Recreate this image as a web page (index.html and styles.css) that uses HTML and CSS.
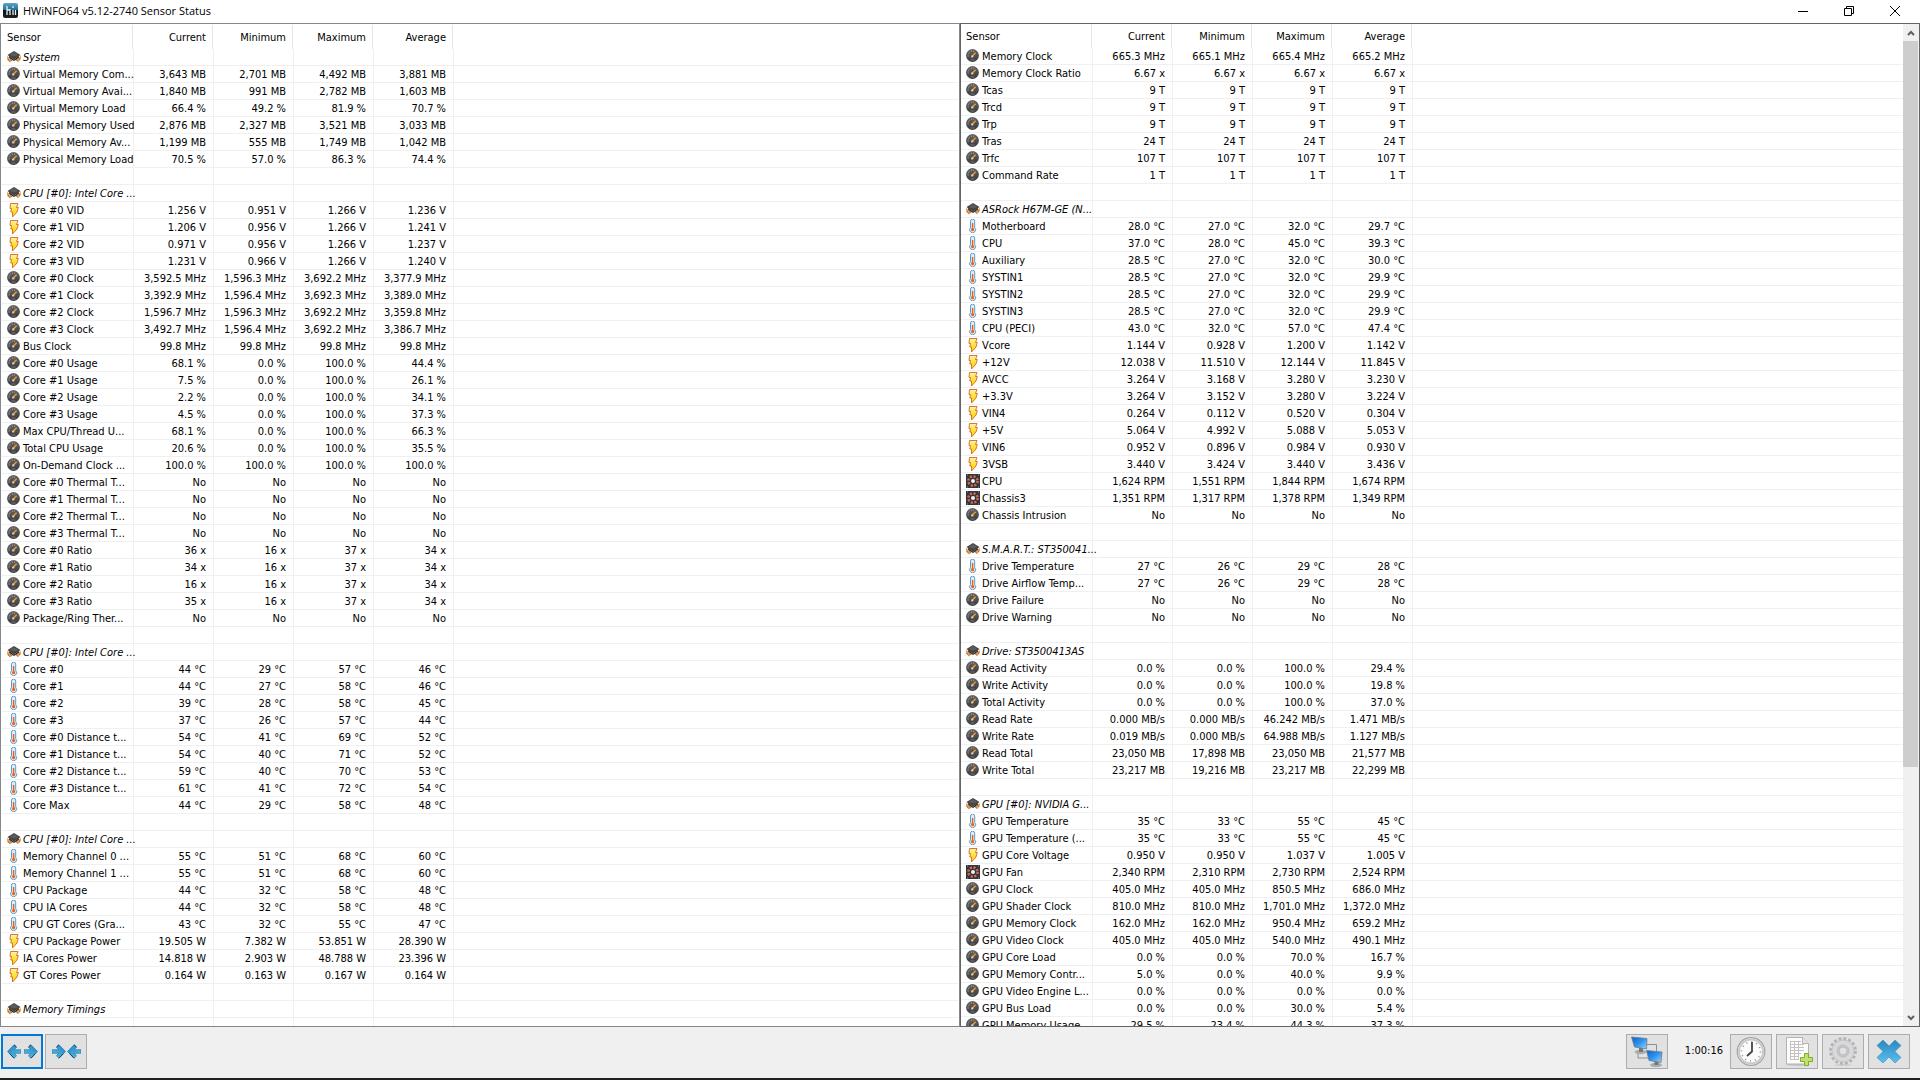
FILE: index.html
```html
<!DOCTYPE html>
<html lang="en">
<head>
  <meta charset="UTF-8">
  <title>HWiNFO64 v5.12-2740 Sensor Status</title>
  <link rel="stylesheet" href="styles.css">
</head>

<body>

<svg class="defs" aria-hidden="true">
  <linearGradient id="gdark" x1="0" y1="0" x2="0" y2="1"><stop offset="0" stop-color="#666"/><stop offset="1" stop-color="#3a3a3a"/></linearGradient>
  <linearGradient id="gblue" x1="0" y1="0" x2="1" y2="1"><stop offset="0" stop-color="#1c7fc4"/><stop offset="1" stop-color="#5cc8e0"/></linearGradient>
  <linearGradient id="gscreen" x1="0" y1="0" x2="1" y2="1"><stop offset="0" stop-color="#0b5fd0"/><stop offset=".5" stop-color="#2f93ee"/><stop offset="1" stop-color="#9fd4fb"/></linearGradient>
  <linearGradient id="gx" x1="0" y1="0" x2="0" y2="1"><stop offset="0" stop-color="#2b86bd"/><stop offset="1" stop-color="#5bc0f0"/></linearGradient>
  <linearGradient id="gbolt" x1="0" y1="0" x2="0" y2="1"><stop offset="0" stop-color="#fff3b0"/><stop offset=".5" stop-color="#ffe03a"/><stop offset="1" stop-color="#ffd200"/></linearGradient>
  <linearGradient id="gapp" x1="0" y1="0" x2="0" y2="1"><stop offset="0" stop-color="#5ba7c6"/><stop offset=".5" stop-color="#176a95"/><stop offset=".5" stop-color="#111"/><stop offset="1" stop-color="#222"/></linearGradient>

  <symbol id="gauge" viewBox="0 0 14 14">
    <circle cx="6.5" cy="6.5" r="6.4" fill="url(#gdark)"/>
    <path d="M2.2 7.5A4.4 4.4 0 0 1 8 2.4" fill="none" stroke="#b4b4b4" stroke-dasharray="1 1.1"/>
    <path d="M6.2 7.2L9.6 3.8" stroke="#f79420" stroke-width="1.6"/>
    <circle cx="6.2" cy="7.4" r="1.2" fill="#c9c9c9"/>
    <path d="M4.5 11H8.5" stroke="#777"/>
  </symbol>
  <symbol id="chip" viewBox="0 0 14 14">
    <path d="M0 6l7 3.500L14 6v3l-2.500 3L7 9.500 3 12.500 0 9.500z" fill="#e0a972"/>
    <path d="M1 9l1.500 2.500M3 8l1.500 3M9.500 9l1 2.500M12 8l.5 2" stroke="#9c5f2c" stroke-width=".8"/>
    <path d="M7 1l6.500 4L7 9.800.5 5z" fill="#444"/>
    <path d="M7 2l4.500 3L7 6.500 2.500 5z" fill="#5c5c5c"/>
    <path d="M2 6L7 9.800 12 6v1.500L7 11 2 7.500z" fill="#252525"/>
  </symbol>
  <symbol id="bolt" viewBox="0 0 14 14">
    <path d="M3.500.5h7.500L9.500 4.500h1.800L10 9l-4.500 5V9H3.800L4.500 5.500H3z" fill="url(#gbolt)" stroke="#cf6a20" stroke-width=".9"/>
  </symbol>
  <symbol id="thermo" viewBox="0 0 14 14">
    <path d="M4.500 2.200a2.100 2.100 0 0 1 4.200 0V8.600a3 3 0 1 1-4.200 0z" fill="#d9eefa" stroke="#6497bd"/>
    <path d="M6.600 4V10" stroke="#e8631a" stroke-width="1.400"/>
    <circle cx="6.600" cy="10.600" r="1.600" fill="#f2600f"/>
  </symbol>
  <symbol id="fan" viewBox="0 0 14 14">
    <path d="M0 0h14v14H0z" fill="#30363c"/>
    <circle cx="7" cy="7" r="4.600" fill="none" stroke="#d8664c" stroke-width="2.600" stroke-dasharray="2.100 1.500"/>
    <circle cx="7" cy="7" r="2" fill="#f3f0f0"/>
    <path d="M1 1h1M12 1h1M1 13h1M12 13h1" stroke="#8b959d"/>
  </symbol>
  <symbol id="arrow" viewBox="0 0 14 15">
    <path d="M.5 7.500L7 .8 9.500 3 7.500 5.700H14V9.300H7.500L9.500 12 7 14.200z" fill="url(#gblue)" stroke="#1a6aa8" stroke-width=".6"/>
    <path d="M7 .8L9.500 3M2.500 9.500L7 14.200" stroke="#17406c"/>
  </symbol>
</svg>

<header class="titlebar">
  <svg class="app-icon" viewBox="0 0 15 15"><rect width="15" height="15" rx="2" fill="url(#gapp)"/><path d="M4 3v9M7 6v6M10 3v2M10 7v5M12.500 7v5M4 7h3" stroke="#e6f2f8" stroke-width="1.300"/></svg>
  <h1 class="title">HWiNFO64 v5.12-2740 Sensor Status</h1>
  <button class="caption" aria-label="Minimize"><svg viewBox="0 0 10 10"><path d="M0 5.500h10"/></svg></button>
  <button class="caption" aria-label="Restore"><svg viewBox="0 0 10 10"><path d="M.5 2.500h7v7h-7zM2.500 2.500v-2h7v7h-2"/></svg></button>
  <button class="caption" aria-label="Close"><svg viewBox="0 0 10 10"><path d="M0 0l10 10M10 0L0 10"/></svg></button>
</header>

<main class="panes">
  <section class="pane pane-left">
    <div class="list">
      <table class="sensors">
        <colgroup><col class="name"><col class="val"><col class="val"><col class="val"><col class="val"><col></colgroup>
        <thead><tr><th>Sensor</th><th>Current</th><th>Minimum</th><th>Maximum</th><th>Average</th><th></th></tr></thead>
        <tbody id="left"></tbody>
      </table>
    </div>
  </section>
  <section class="pane pane-right">
    <div class="list">
      <table class="sensors">
        <colgroup><col class="name"><col class="val"><col class="val"><col class="val"><col class="val"><col></colgroup>
        <thead><tr><th>Sensor</th><th>Current</th><th>Minimum</th><th>Maximum</th><th>Average</th><th></th></tr></thead>
        <tbody id="right"></tbody>
      </table>
    </div>
    <div class="scrollbar">
      <button class="scroll-btn" aria-label="Scroll up"><svg viewBox="0 0 8 6"><path d="M1 5l3-3 3 3"/></svg></button>
      <div class="track"><div class="thumb"></div></div>
      <button class="scroll-btn" aria-label="Scroll down"><svg viewBox="0 0 8 6"><path d="M1 1l3 3 3-3"/></svg></button>
    </div>
  </section>
</main>

<footer class="toolbar">
  <button class="tool focused" aria-label="Expand columns">
    <svg viewBox="2 2 38 31"><use href="#arrow" x="6" y="10" width="14" height="15"/><use href="#arrow" x="-37" y="10" width="14" height="15" transform="scale(-1 1)"/></svg>
  </button>
  <button class="tool" aria-label="Shrink columns">
    <svg viewBox="2 2 38 31"><use href="#arrow" x="-21" y="10" width="14" height="15" transform="scale(-1 1)"/><use href="#arrow" x="22" y="10" width="14" height="15"/></svg>
  </button>
  <span class="spacer"></span>
  <button class="tool" aria-label="Remote sensors">
    <svg viewBox="2 2 38 31">
      <path d="M21 10.500h9.500V17M12 19v5h10" fill="none" stroke="#8a8f93"/>
      <ellipse cx="14.500" cy="18" rx="6" ry="2.200" fill="#a9adb0"/><path d="M13 14h4v4h-4z" fill="#777"/>
      <path d="M5.500 3l15.500 1.500-.5 10.500L8.500 13z" fill="url(#gscreen)" stroke="#6d7c88" stroke-width=".8"/>
      <ellipse cx="30" cy="31" rx="6" ry="2.200" fill="#a9adb0"/><path d="M28.500 27h4v4h-4z" fill="#777"/>
      <path d="M20.500 16.500L36 18l-1 10.500-12-2z" fill="url(#gscreen)" stroke="#6d7c88" stroke-width=".8"/>
    </svg>
  </button>
  <time class="elapsed">1:00:16</time>
  <button class="tool" aria-label="Reset timer">
    <svg viewBox="2 2 38 31">
      <circle cx="21" cy="17.500" r="13.800" fill="#fbfbfb" stroke="#a3a3a3" stroke-width="1.200"/>
      <circle cx="21" cy="17.500" r="12" fill="none" stroke="#c9c9c9" stroke-width="2"/>
      <circle cx="21" cy="17.500" r="9.500" fill="none" stroke="#888" stroke-width="1.500" stroke-dasharray="1 3.974"/>
      <path d="M22 8v9.500l-5 4.500" fill="none" stroke="#444" stroke-width="1.800"/>
    </svg>
  </button>
  <button class="tool" aria-label="Start logging">
    <svg viewBox="2 2 38 31">
      <ellipse cx="22" cy="30.500" rx="12" ry="1.500" fill="#c4c4c4"/>
      <path d="M10.500 3.500h16l6 6v20.500h-22z" fill="#fcfcfc" stroke="#b3b3b3"/>
      <path d="M26.500 3.500v6h6" fill="#e6e6e6" stroke="#b3b3b3"/>
      <path d="M14 7.500h11M14 10.500h14M14 13.500h14M14 16.500h14M14 19.500h11M14 22.500h9M14 25.500h9M14.500 7v19M18.500 7v19M22.500 7v19" stroke="#c2c2c2"/>
      <path d="M28.500 19.500h4v4h4v4h-4v4h-4v-4h-4v-4h4z" fill="#c0e070" stroke="#7cae2a"/>
    </svg>
  </button>
  <button class="tool" aria-label="Settings">
    <svg viewBox="2 2 38 31">
      <ellipse cx="21" cy="31" rx="9" ry="1" fill="#cfcfcf"/>
      <circle cx="21" cy="17" r="12.500" fill="none" stroke="#b4b4b8" stroke-width="2.800" stroke-dasharray="2.900 2.010"/>
      <circle cx="21" cy="17" r="11" fill="#d9d9db" stroke="#bcbcc0" stroke-width=".8"/>
      <circle cx="21" cy="17" r="6" fill="#c8c8cb" stroke="#b8b8bc" stroke-width=".8"/>
      <circle cx="21" cy="17" r="4" fill="#e1e1e1" stroke="#b4b4b8" stroke-width=".8"/>
    </svg>
  </button>
  <button class="tool" aria-label="Close sensors">
    <svg viewBox="2 2 38 31"><path d="M15 6l6 6 6-6 6 5.500-6 6 6 6L27 29l-6-6-6 6-6-5.500 6-6-6-6z" fill="url(#gx)" stroke="#3a8fc0" stroke-width=".6"/></svg>
  </button>
</footer>
<div class="taskbar-edge"></div>

<script src="sensors.js"></script>
</body>
</html>
```
FILE: styles.css
```css
* {box-sizing: border-box}
body {
  margin: 0;
  height: 100vh;
  display: flex;
  flex-direction: column;
  overflow: hidden;
  background: #f0f0f0;
  color: #000;
  font: 11px/16px "DejaVu Sans Condensed", "DejaVu Sans", sans-serif;
}
button {margin: 0; padding: 0; border: 0; background: none; display: flex; align-items: center; justify-content: center}
.defs {position: absolute; width: 0; height: 0}

/* title bar */
.titlebar {flex: none; display: flex; align-items: center; height: 23px; padding: 0 2px 2px 3px; background: #fff}
.app-icon {width: 15px; height: 15px; margin-right: 5px}
.title {flex: 1; margin: 0; font: 11px/20px "Open Sans", "Noto Sans", sans-serif}
.caption {width: 46px; height: 20px}
.caption svg {width: 10px; height: 10px; fill: none; stroke: #000; overflow: visible}

/* the two sensor lists */
.panes {flex: 1; min-height: 0; display: grid; grid-template-columns: 1fr 1fr}
.pane {display: flex; min-width: 0; min-height: 0; background: #fff; border: 1px solid #828790}
.pane-left {padding: 1px 1px 0}
.pane-right {border-color: #646464}
.list {flex: 1; min-width: 0; overflow: hidden}

.sensors {width: 100%; table-layout: fixed; border-collapse: separate; border-spacing: 0}
.sensors .name {width: 131px}
.sensors .val {width: 80px}
.sensors th, .sensors td {text-align: right; white-space: nowrap}
.sensors th {height: 24px; padding: 2px 6px 0 0; font-weight: normal; border-right: 1px solid #e5e5e5}
.sensors th:first-child {padding-left: 5px; text-align: left}
.sensors th:last-child {border-right: 0}
.sensors td {height: 17px; padding: 2px 7px 0 0; line-height: 14px; border-left: 1px solid #f0f0f0; border-bottom: 1px solid #f0f0f0}
.sensors td:first-child {padding: 1px 0 0 5px; border-left: 0; text-align: left}
.sensor {display: flex; gap: 2px; height: 15px; line-height: 16px}
.icon {flex: none; width: 14px; height: 14px}
.group {font-style: italic}

/* scroll bar */
.scrollbar {flex: none; width: 16px; display: flex; flex-direction: column; background: #f0f0f0}
.scroll-btn {width: 15px; height: 17px}
.scroll-btn svg {width: 8px; height: 6px; fill: none; stroke: #606060; stroke-width: 2}
.track {flex: 1; min-height: 0}
.thumb {width: 15px; height: 75%; background: #cdcdcd}

/* bottom bar */
.toolbar {flex: none; display: flex; gap: 4px; height: 51px; padding: 7px 10px 0 1px}
.tool {width: 42px; height: 35px; background: #e1e1e1; border: 1px solid #adadad}
.tool svg {width: 38px; height: 31px}
.tool.focused {border: 2px solid #0078d7}
.tool.focused + .tool {margin-left: -2px}
.spacer {flex: 1}
.elapsed {width: 54px; padding-right: 3px; text-align: right; line-height: 34px}
.taskbar-edge {flex: none; height: 2px; background: #1f1f23}
```
FILE: sensors.js
```js
// icon | name | current | minimum | maximum | average, an empty line is a spacer row
// one value only: it is the same in all four columns
var icons = {c: "chip", g: "gauge", b: "bolt", t: "thermo", f: "fan"};

var left = `c|System
g|Virtual Memory Com...|3,643 MB|2,701 MB|4,492 MB|3,881 MB
g|Virtual Memory Avai...|1,840 MB|991 MB|2,782 MB|1,603 MB
g|Virtual Memory Load|66.4 %|49.2 %|81.9 %|70.7 %
g|Physical Memory Used|2,876 MB|2,327 MB|3,521 MB|3,033 MB
g|Physical Memory Av...|1,199 MB|555 MB|1,749 MB|1,042 MB
g|Physical Memory Load|70.5 %|57.0 %|86.3 %|74.4 %

c|CPU [#0]: Intel Core ...
b|Core #0 VID|1.256 V|0.951 V|1.266 V|1.236 V
b|Core #1 VID|1.206 V|0.956 V|1.266 V|1.241 V
b|Core #2 VID|0.971 V|0.956 V|1.266 V|1.237 V
b|Core #3 VID|1.231 V|0.966 V|1.266 V|1.240 V
g|Core #0 Clock|3,592.5 MHz|1,596.3 MHz|3,692.2 MHz|3,377.9 MHz
g|Core #1 Clock|3,392.9 MHz|1,596.4 MHz|3,692.3 MHz|3,389.0 MHz
g|Core #2 Clock|1,596.7 MHz|1,596.3 MHz|3,692.2 MHz|3,359.8 MHz
g|Core #3 Clock|3,492.7 MHz|1,596.4 MHz|3,692.2 MHz|3,386.7 MHz
g|Bus Clock|99.8 MHz
g|Core #0 Usage|68.1 %|0.0 %|100.0 %|44.4 %
g|Core #1 Usage|7.5 %|0.0 %|100.0 %|26.1 %
g|Core #2 Usage|2.2 %|0.0 %|100.0 %|34.1 %
g|Core #3 Usage|4.5 %|0.0 %|100.0 %|37.3 %
g|Max CPU/Thread U...|68.1 %|0.0 %|100.0 %|66.3 %
g|Total CPU Usage|20.6 %|0.0 %|100.0 %|35.5 %
g|On-Demand Clock ...|100.0 %
g|Core #0 Thermal T...|No
g|Core #1 Thermal T...|No
g|Core #2 Thermal T...|No
g|Core #3 Thermal T...|No
g|Core #0 Ratio|36 x|16 x|37 x|34 x
g|Core #1 Ratio|34 x|16 x|37 x|34 x
g|Core #2 Ratio|16 x|16 x|37 x|34 x
g|Core #3 Ratio|35 x|16 x|37 x|34 x
g|Package/Ring Ther...|No

c|CPU [#0]: Intel Core ...
t|Core #0|44 °C|29 °C|57 °C|46 °C
t|Core #1|44 °C|27 °C|58 °C|46 °C
t|Core #2|39 °C|28 °C|58 °C|45 °C
t|Core #3|37 °C|26 °C|57 °C|44 °C
t|Core #0 Distance t...|54 °C|41 °C|69 °C|52 °C
t|Core #1 Distance t...|54 °C|40 °C|71 °C|52 °C
t|Core #2 Distance t...|59 °C|40 °C|70 °C|53 °C
t|Core #3 Distance t...|61 °C|41 °C|72 °C|54 °C
t|Core Max|44 °C|29 °C|58 °C|48 °C

c|CPU [#0]: Intel Core ...
t|Memory Channel 0 ...|55 °C|51 °C|68 °C|60 °C
t|Memory Channel 1 ...|55 °C|51 °C|68 °C|60 °C
t|CPU Package|44 °C|32 °C|58 °C|48 °C
t|CPU IA Cores|44 °C|32 °C|58 °C|48 °C
t|CPU GT Cores (Gra...|43 °C|32 °C|55 °C|47 °C
b|CPU Package Power|19.505 W|7.382 W|53.851 W|28.390 W
b|IA Cores Power|14.818 W|2.903 W|48.788 W|23.396 W
b|GT Cores Power|0.164 W|0.163 W|0.167 W|0.164 W

c|Memory Timings
`;

var right = `g|Memory Clock|665.3 MHz|665.1 MHz|665.4 MHz|665.2 MHz
g|Memory Clock Ratio|6.67 x
g|Tcas|9 T
g|Trcd|9 T
g|Trp|9 T
g|Tras|24 T
g|Trfc|107 T
g|Command Rate|1 T

c|ASRock H67M-GE (N...
t|Motherboard|28.0 °C|27.0 °C|32.0 °C|29.7 °C
t|CPU|37.0 °C|28.0 °C|45.0 °C|39.3 °C
t|Auxiliary|28.5 °C|27.0 °C|32.0 °C|30.0 °C
t|SYSTIN1|28.5 °C|27.0 °C|32.0 °C|29.9 °C
t|SYSTIN2|28.5 °C|27.0 °C|32.0 °C|29.9 °C
t|SYSTIN3|28.5 °C|27.0 °C|32.0 °C|29.9 °C
t|CPU (PECI)|43.0 °C|32.0 °C|57.0 °C|47.4 °C
b|Vcore|1.144 V|0.928 V|1.200 V|1.142 V
b|+12V|12.038 V|11.510 V|12.144 V|11.845 V
b|AVCC|3.264 V|3.168 V|3.280 V|3.230 V
b|+3.3V|3.264 V|3.152 V|3.280 V|3.224 V
b|VIN4|0.264 V|0.112 V|0.520 V|0.304 V
b|+5V|5.064 V|4.992 V|5.088 V|5.053 V
b|VIN6|0.952 V|0.896 V|0.984 V|0.930 V
b|3VSB|3.440 V|3.424 V|3.440 V|3.436 V
f|CPU|1,624 RPM|1,551 RPM|1,844 RPM|1,674 RPM
f|Chassis3|1,351 RPM|1,317 RPM|1,378 RPM|1,349 RPM
g|Chassis Intrusion|No

c|S.M.A.R.T.: ST350041...
t|Drive Temperature|27 °C|26 °C|29 °C|28 °C
t|Drive Airflow Temp...|27 °C|26 °C|29 °C|28 °C
g|Drive Failure|No
g|Drive Warning|No

c|Drive: ST3500413AS
g|Read Activity|0.0 %|0.0 %|100.0 %|29.4 %
g|Write Activity|0.0 %|0.0 %|100.0 %|19.8 %
g|Total Activity|0.0 %|0.0 %|100.0 %|37.0 %
g|Read Rate|0.000 MB/s|0.000 MB/s|46.242 MB/s|1.471 MB/s
g|Write Rate|0.019 MB/s|0.000 MB/s|64.988 MB/s|1.127 MB/s
g|Read Total|23,050 MB|17,898 MB|23,050 MB|21,577 MB
g|Write Total|23,217 MB|19,216 MB|23,217 MB|22,299 MB

c|GPU [#0]: NVIDIA G...
t|GPU Temperature|35 °C|33 °C|55 °C|45 °C
t|GPU Temperature (...|35 °C|33 °C|55 °C|45 °C
b|GPU Core Voltage|0.950 V|0.950 V|1.037 V|1.005 V
f|GPU Fan|2,340 RPM|2,310 RPM|2,730 RPM|2,524 RPM
g|GPU Clock|405.0 MHz|405.0 MHz|850.5 MHz|686.0 MHz
g|GPU Shader Clock|810.0 MHz|810.0 MHz|1,701.0 MHz|1,372.0 MHz
g|GPU Memory Clock|162.0 MHz|162.0 MHz|950.4 MHz|659.2 MHz
g|GPU Video Clock|405.0 MHz|405.0 MHz|540.0 MHz|490.1 MHz
g|GPU Core Load|0.0 %|0.0 %|70.0 %|16.7 %
g|GPU Memory Contr...|5.0 %|0.0 %|40.0 %|9.9 %
g|GPU Video Engine L...|0.0 %
g|GPU Bus Load|0.0 %|0.0 %|30.0 %|5.4 %
g|GPU Memory Usage|29.5 %|23.4 %|44.3 %|37.3 %`;

function fill(id, text) {
  document.getElementById(id).innerHTML = text.split("\n").map(function (line) {
    var f = line.split("|"), cells = "";
    for (var i = 2; i < 6; i++) {
      cells += "<td>" + (f[i] || f[2] || "") + "</td>";
    }
    var name = line ? '<div class="sensor"><svg class="icon"><use href="#' + icons[f[0]] + '"/></svg>' + f[1] + "</div>" : "";
    return '<tr class="' + (f[0] == "c" ? "group" : "") + '"><td>' + name + "</td>" + cells + "<td></td></tr>";
  }).join("");
}

fill("left", left);
fill("right", right);
```
